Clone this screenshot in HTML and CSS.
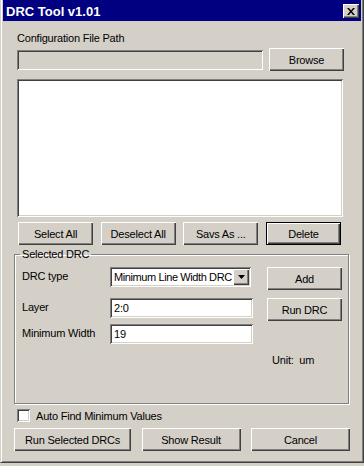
FILE: index.html
```html
<!DOCTYPE html>
<html lang="en">
<head>
    <meta charset="UTF-8">
    <title>DRC Tool v1.01</title>

    <link rel="stylesheet" href="styles.css">
</head>
<body>

    <div class="window">

        <div class="titlebar">
            <span class="title">DRC Tool v1.01</span>
            <span class="close-btn">
                <svg width="8" height="7" viewBox="0 0 8 7">
                    <path d="M0 0h2l2 2.5l2-2.5h2l-3 3.5l3 3.5h-2l-2-2.5l-2 2.5h-2l3-3.5z" fill="#000"/>
                </svg>
            </span>
        </div>

        <div class="content">

            <div class="top">
                <div class="label">Configuration File Path</div>
                <div class="path-row">
                    <div class="field field-disabled"></div>
                    <button class="btn">Browse</button>
                </div>
                <div class="listbox"></div>
                <div class="list-buttons">
                    <button class="btn">Select All</button>
                    <button class="btn">Deselect All</button>
                    <button class="btn">Savs As ...</button>
                    <button class="btn btn-default">Delete</button>
                </div>
            </div>

            <fieldset class="group">
                <legend>Selected DRC</legend>
                <div class="group-grid">
                    <span class="row-label">DRC type</span>
                    <div class="field combo">
                        <span class="combo-text">Minimum Line Width DRC</span>
                        <span class="combo-arrow">
                            <svg width="7" height="4" viewBox="0 0 7 4"><path d="M0 0h7l-3.5 4z" fill="#000"/></svg>
                        </span>
                    </div>
                    <button class="btn">Add</button>

                    <span class="row-label">Layer</span>
                    <div class="field">2:0</div>
                    <button class="btn">Run DRC</button>

                    <span class="row-label">Minimum Width</span>
                    <div class="field">19</div>
                    <span></span>

                    <span></span>
                    <span></span>
                    <span class="unit">Unit:&nbsp; um</span>
                </div>
            </fieldset>

            <label class="check-row">
                <span class="checkbox"></span>
                Auto Find Minimum Values
            </label>

            <div class="bottom-buttons">
                <button class="btn btn-wide">Run Selected DRCs</button>
                <button class="btn btn-mid">Show Result</button>
                <button class="btn btn-mid">Cancel</button>
            </div>

        </div>
    </div>

</body>
</html>
```

FILE: styles.css
```css
body {
    margin: 0;
    padding: 0;
    width: 364px;
    height: 466px;
    overflow: hidden;
    background: #D4D0C8;
    font-family: "Liberation Sans", Arial, sans-serif;
    font-size: 11px;
    letter-spacing: -0.2px;
    color: #000;
}

.window {
    box-sizing: border-box;
    width: 364px;
    height: 463px;
    display: flex;
    flex-direction: column;
    padding: 0 2px 2px 2px;
    border: 1px solid;
    border-top: none;
    border-color: #D4D0C8 #404040 #404040 #D4D0C8;
    box-shadow: inset 1px 0 #FFFFFF, inset -1px -1px #808080;
    background: #D4D0C8;
}

/* title bar */

.titlebar {
    height: 21px;
    display: flex;
    align-items: center;
    justify-content: space-between;
    padding: 1px 2px 0 3px;
    box-sizing: border-box;
    background: #000080;
}

.title {
    color: #FFFFFF;
    font-weight: bold;
    font-size: 13px;
    letter-spacing: 0;
}

.close-btn {
    width: 16px;
    height: 14px;
    display: flex;
    align-items: center;
    justify-content: center;
    background: #D4D0C8;
    box-shadow: inset 1px 1px #FFFFFF, inset -1px -1px #404040, inset -2px -2px #808080;
}

/* main area */

.content {
    flex: 1;
    display: flex;
    flex-direction: column;
    padding: 11px 11px 0 11px;
}

.top {
    margin: 0 6px 0 3px;
}

.label {
    line-height: 13px;
}

.path-row {
    display: flex;
    justify-content: space-between;
    margin-top: 3px;
}

.path-row .field {
    width: 246px;
    margin-top: 2px;
}

/* classic 3d controls */

.btn {
    width: 75px;
    height: 23px;
    padding: 0;
    border: none;
    background: #D4D0C8;
    font: inherit;
    letter-spacing: inherit;
    color: #000;
    box-shadow: inset 1px 1px #FFFFFF, inset -1px -1px #404040, inset -2px -2px #808080;
}

.btn-default {
    border: 1px solid #000;
}

.btn-wide {
    width: 117px;
}

.btn-mid {
    width: 99px;
}

.field {
    box-sizing: border-box;
    width: 143px;
    height: 20px;
    padding: 0 4px;
    display: flex;
    align-items: center;
    background: #FFFFFF;
    box-shadow: inset 1px 1px #808080, inset -1px -1px #FFFFFF, inset 2px 2px #404040, inset -2px -2px #D4D0C8;
}

.field-disabled {
    background: #D4D0C8;
}

.listbox {
    height: 138px;
    width: 326px;
    margin-top: 8px;
    background: #FFFFFF;
    box-shadow: inset 1px 1px #808080, inset -1px -1px #FFFFFF, inset 2px 2px #404040, inset -2px -2px #D4D0C8;
}

.list-buttons {
    display: flex;
    justify-content: space-between;
    margin: 5px 3px 0 1px;
}

/* group box */

.group {
    margin: 3px 1px 0 0;
    padding: 0 0 36px 0;
    min-inline-size: 0;
    border: 1px solid #808080;
    box-shadow: 1px 1px #FFFFFF, inset 1px 1px #FFFFFF;
}

.group legend {
    margin-left: 5px;
    padding: 0 2px;
    line-height: 13px;
}

.group-grid {
    display: grid;
    grid-template-columns: 88px 157px 75px;
    grid-template-rows: 31px 26px 30px auto;
    padding: 6px 0 0 7px;
    align-items: start;
}

.row-label {
    padding-top: 3px;
}

.combo {
    width: 141px;
    padding: 0 2px 0 4px;
    justify-content: space-between;
    gap: 1px;
}

.combo-text {
    white-space: nowrap;
    overflow: hidden;
    letter-spacing: -0.4px;
}

.combo-arrow {
    flex: none;
    width: 16px;
    height: 16px;
    display: flex;
    align-items: center;
    justify-content: center;
    background: #D4D0C8;
    box-shadow: inset 1px 1px #FFFFFF, inset -1px -1px #404040, inset -2px -2px #808080;
}

.unit {
    padding-left: 5px;
    line-height: 13px;
}

/* bottom */

.check-row {
    display: flex;
    align-items: center;
    gap: 6px;
    margin: 5px 0 0 3px;
    height: 13px;
}

.checkbox {
    box-sizing: border-box;
    width: 13px;
    height: 13px;
    background: #FFFFFF;
    box-shadow: inset 1px 1px #808080, inset -1px -1px #FFFFFF, inset 2px 2px #404040, inset -2px -2px #D4D0C8;
}

.bottom-buttons {
    display: flex;
    justify-content: space-between;
    margin-top: 6px;
}
```
